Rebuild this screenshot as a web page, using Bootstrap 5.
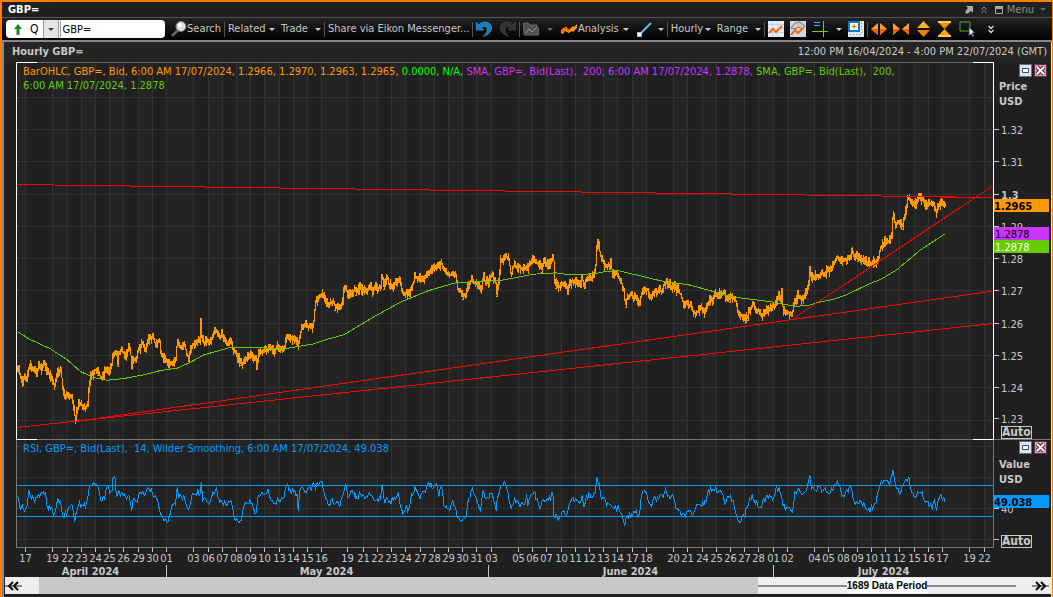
<!DOCTYPE html>
<html lang="en">
<head>
<meta charset="utf-8">
<meta name="viewport" content="width=device-width, initial-scale=1">
<title>GBP= Hourly</title>
<link rel="stylesheet" href="https://cdn.jsdelivr.net/npm/bootstrap@5.3.0/dist/css/bootstrap.min.css">
<style>
body{background:#222;color:#c8c8c8;font:11px/14px "DejaVu Sans Condensed","DejaVu Sans",sans-serif}
button{background:none;border:0;padding:0;color:inherit;font:inherit}
.frame{border:solid #ff8000;border-width:2px 1px 0 2px;min-height:100vh}
.titlebar{height:15px;background:#202020;padding:0 6px}
.titlebar h1{font-size:11px;line-height:14px;font-weight:700;color:#fff}
.titlebar button,.titlebar svg{color:#8c8c8c}
.tools{height:23px;border-top:1px solid #555;background:linear-gradient(#222,#000);white-space:nowrap}
.tools button{display:flex;align-items:center;flex:none}
.symbol{width:159px;height:18px;background:#fff;border-radius:4px;color:#000;margin-left:4px}
.tools .drop{width:16px;height:18px;background:#e4e4e4;border:solid #999;border-width:0 1px;justify-content:center}
.symbol .quote{font-size:12px}
.symbol input{width:90px;height:16px;border:0;padding:0 2px;font:inherit;outline:0;color:#000;border-left:1px solid #999;margin-left:1px;background:none}
.sep{width:1px;height:15px;background:#555;margin:0 3px;flex:none}
.tri{display:inline-block;border:3px solid transparent;border-top-color:#ccc;border-bottom:0}
.tri-dark{border-top-color:#444}.tri-off{border-top-color:#666}.tri-menu{border-top-color:#56687c}
.w1{width:47px}.w2{width:40px}.w3{width:141px}.w4{width:44px}
.g6{margin-left:6px}
.panel{border:solid #888;border-width:2px 0 0 2px;flex:1 0 auto;background:#202020}
.panel-in{border-right:1px solid #eee}
.heading{height:20px;padding:3px 4px 0 8px;background:#242424}
.heading h2{font-size:11px;line-height:14px;font-weight:700;color:#c8c8c8}
.chart{display:grid;grid-template-columns:12px minmax(0,1fr) 57px}
.chart svg{display:block;width:100%}
.price{height:377px}.rsi{height:109px}.dates{height:29px}
.legend-line{left:7px;top:3px;line-height:14px;white-space:pre}
.or{color:#ff9900}.gr{color:#66cc00}.lime{color:#0f0}.vi{color:#cc33ff}.bl{color:#0099ff}
.winbtns{right:4px;top:2px;gap:2px}
.autobtn{left:7px;bottom:0;border:1px solid #c8c8c8;font-size:12px;font-weight:700;line-height:11px;background:#202020}
.scroll{height:17px;margin-left:1px;background:#c8c8c8;color:#000}
.scroll .end{width:34px;background:#eee}
.scroll .thumb{width:28%;background:#eee;padding-right:2px}
.rule{height:2px;background:#888}
.scroll .period{background:#fff;font:700 10px/14px "Liberation Sans",sans-serif}
</style>
</head>
<body>
<main class="frame d-flex flex-column">
<header class="titlebar d-flex align-items-center">
  <h1 class="m-0 me-auto">GBP=</h1>
  <button aria-label="Pop out" class="d-flex"><svg width="8" height="8" viewBox="0 0 8 8"><path d="M1 0h7v7L6 5 2 8 0 6l3-4z" fill="#aaa"/></svg></button>
  <button aria-label="Collapse" class="d-flex ms-2"><svg width="6" height="8" viewBox="0 0 6 8"><path d="M.5 3.500 3 1l2.500 2.500M.5 7 3 4.500 5.500 7" fill="none" stroke="#999"/></svg></button>
  <button aria-label="Restore" class="d-flex ms-2"><svg width="8" height="8" viewBox="0 0 8 8"><path d="M.5 1h7v6.500h-7z" fill="none" stroke="#aaa"/><path d="M0 0h8v3H0z" fill="#aaa"/></svg></button>
  <button class="ms-1 d-flex align-items-center">Menu<span class="tri tri-menu g6"></span></button>
</header>
<nav class="tools d-flex align-items-center" aria-label="Chart tools">
  <div class="symbol d-flex align-items-center">
    <svg class="ms-2" width="8" height="11" viewBox="0 0 8 11"><path d="M4 0 8 5H5.500v6h-3V5H0z" fill="#1d8a1d"/></svg>
    <button class="quote ms-2 me-1">Q</button>
    <button class="drop" aria-label="Quote type"><span class="tri tri-dark"></span></button>
    <input value="GBP=" aria-label="Symbol">
  </div>
  <button class="g6"><svg width="16" height="16" viewBox="0 0 16 16"><path d="M1 15 7 9" stroke="#666" stroke-width="2.500"/><circle cx="10" cy="5.500" r="5" fill="#ddd" stroke="#777"/><circle cx="9" cy="4" r="2" fill="#fff"/></svg>Search</button>
  <i class="sep"></i>
  <button class="w1 justify-content-between">Related<span class="tri"></span></button>
  <button class="w2 g6 justify-content-between">Trade<span class="tri"></span></button>
  <i class="sep"></i>
  <button class="w3">Share via Eikon Messenger...</button>
  <i class="sep"></i>
  <button aria-label="Undo"><svg width="16" height="16" viewBox="0 0 16 16"><path d="M0 1v8h8L5.500 6.500C8 4.500 12 6 11 10c-.5 2-2 4-4 5.500C13 14 16 10 15.500 6 14 0 7-.5 2.800 3.800z" fill="#1c7cc0" stroke="#4aa5dc" stroke-width=".6"/></svg></button>
  <button aria-label="Redo" class="ms-2"><svg width="16" height="16" viewBox="0 0 16 16"><path d="M16 1v8H8l2.500-2.500C8 4.500 4 6 5 10c.5 2 2 4 4 5.500C3 14 0 10 .5 6 2 0 9-.5 13.200 3.800z" fill="#333" stroke="#4a4a4a" stroke-width=".6"/></svg></button>
  <i class="sep"></i>
  <button aria-label="Open chart"><svg width="16" height="14" viewBox="0 0 16 14"><path d="M.5 1h5l1 2H14v3h1.500v7H1z" fill="#505050" stroke="#686868"/><path d="m3 11 3-4 3 3 5-5" fill="none" stroke="#999"/></svg><span class="tri tri-off ms-2"></span></button>
  <button class="ms-2"><svg width="17" height="10" viewBox="0 0 17 10"><path d="m0 6 4-3 4 3 4-4 1 1 3-3v4l-4 4-1-1-3 2-4-2-2 3-2-1z" fill="#ff9a10"/><path d="m1 8 4-4 3 3" stroke="#f60" fill="none" stroke-width="2"/></svg>Analysis<span class="tri ms-1"></span></button>
  <button class="ms-2" aria-label="Draw line"><svg width="15" height="15" viewBox="0 0 15 15"><path d="M3 12 14 1" stroke="#69b7ef" stroke-width="2"/><path d="M.5 10.500h4v4h-4z" fill="#fff" stroke="#9cf"/></svg><span class="tri g6"></span></button>
  <i class="sep"></i>
  <button class="w2 justify-content-between">Hourly<span class="tri"></span></button>
  <button class="w4 g6 justify-content-between">Range<span class="tri"></span></button>
  <i class="sep"></i>
  <button aria-label="Chart"><svg width="16" height="16" viewBox="0 0 16 16"><path d="M0 0h16v16H0z" fill="#e6edf6"/><path d="M0 3.500h16M0 7.500h16M0 11.500h16M4.500 0v16M9.500 0v16" stroke="#c6d2e4"/><path d="m1 12 4-4 3 3 6-6" fill="none" stroke="#f60" stroke-width="2"/></svg></button>
  <button aria-label="Edit chart" class="g6"><svg width="16" height="16" viewBox="0 0 16 16"><path d="M0 0h16v16H0z" fill="#cdd7e6"/><path d="m1 14 4-5 3 3 6-6" fill="none" stroke="#f60" stroke-width="2"/><path d="m1 7 4-5 5-1 5 4-3 3-3-2-4 2z" fill="#ddc4b8" stroke="#777"/></svg></button>
  <button aria-label="Crosshair" class="g6"><svg width="16" height="16" viewBox="0 0 16 16" shape-rendering="crispEdges"><path d="M2 1.500h6M2 4.500h6" stroke="#49b0ff"/><path d="M11.500 0v16M0 10.500h16" stroke="#69cc20"/></svg><span class="tri ms-2"></span></button>
  <button aria-label="Zoom box" class="g6"><svg width="16" height="16" viewBox="0 0 16 16"><path d="M0 0h16v16H0z" fill="#e4eaf4"/><path d="M1 1h10v9H1z" fill="#fff" stroke="#1579c6" stroke-width="2"/><path d="M6 3v5M3.500 5.500h5" stroke="#e70"/><path d="M13.500 2v12M2 13.500h12" stroke="#7c90b0" stroke-dasharray="1 2"/></svg></button>
  <i class="sep"></i>
  <button aria-label="Widen"><svg width="16" height="12" viewBox="0 0 16 12"><path d="M7 0v12L0 6zM9 0v12l7-6z" fill="#ffa030"/><path d="M7 6v6L0 6zM9 6v6l7-6z" fill="#e86800"/></svg></button>
  <button aria-label="Narrow" class="g6"><svg width="16" height="12" viewBox="0 0 16 12"><path d="M0 0v12l7-6zM16 0v12L9 6z" fill="#ffa030"/><path d="M0 6v6l7-6zM16 6v6L9 6z" fill="#e86800"/></svg></button>
  <button aria-label="Taller" class="ms-2"><svg width="13" height="16" viewBox="0 0 13 16"><path d="M0 7h13L6.500 0z" fill="#ffb02c"/><path d="M0 9h13l-6.500 7z" fill="#f08008"/></svg></button>
  <button aria-label="Shorter" class="ms-2"><svg width="13" height="16" viewBox="0 0 13 16"><path d="M0 1h13L6.500 8z" fill="#f08a10"/><path d="M0 15h13L6.500 8z" fill="#ff9a1c"/><path d="M0 0h13v2H0zM0 14h13v2H0z" fill="#ffd040"/></svg></button>
  <button aria-label="Select" class="ms-2"><svg width="17" height="16" viewBox="0 0 17 16"><path d="M1 1h10v9H1z" fill="none" stroke="#55b020"/><path d="m10 6 6 6h-3l2 3-1 1-2-3-2 2z" fill="#dfe8f4" stroke="#345"/></svg></button>
  <button aria-label="More" class="ms-2 ps-1"><svg width="6" height="9" viewBox="0 0 6 9"><path d="m.5 1 2.500 2.500L5.500 1M.5 5 3 7.500 5.500 5" fill="none" stroke="#ddd" stroke-width="1.300"/></svg></button>
</nav>
<section class="panel d-flex flex-column">
<div class="panel-in flex-grow-1">
  <div class="heading d-flex justify-content-between"><h2 class="m-0">Hourly GBP=</h2><span>12:00 PM 16/04/2024 - 4:00 PM 22/07/2024 (GMT)</span></div>
  <div class="chart">
    <div></div>
    <div class="position-relative"><svg id="price" class="price" role="img" aria-label="Hourly price"></svg>
      <div class="legend-line position-absolute"><div class="d-flex"><div class="or">BarOHLC, GBP=, Bid, 6:00 AM 17/07/2024, 1.2966, 1.2970, 1.2963, 1.2965, </div><div class="lime">0.0000, N/A, </div><div class="vi">SMA, GBP=, Bid(Last),  200, 6:00 AM 17/07/2024, 1.2878, </div><div class="gr">SMA, GBP=, Bid(Last),  200,</div></div><div class="gr">6:00 AM 17/07/2024, 1.2878</div></div></div>
    <div class="position-relative"><svg id="priceAxis" class="price"></svg>
      <div class="winbtns position-absolute d-flex"><button aria-label="Maximise"><svg width="13" height="13" viewBox="0 0 13 13"><path d="M.5.5h12v12H.5z" fill="#dfe3ee" stroke="#5c7196"/><path d="M3.500 4.500h6v4h-6z" fill="#fff" stroke="#334a70"/></svg></button><button aria-label="Close"><svg width="13" height="13" viewBox="0 0 13 13"><path d="M.5.5h12v12H.5z" fill="#c4a8b0" stroke="#6c3044"/><path d="m3 3 7 7m0-7-7 7" stroke="#5a2030" stroke-width="4"/><path d="m3 3 7 7m0-7-7 7" stroke="#fff" stroke-width="2"/></svg></button></div>
      <button class="autobtn position-absolute">Auto</button></div>
    <div></div>
    <div class="position-relative"><svg id="rsi" class="rsi" role="img" aria-label="Relative strength"></svg>
      <div class="legend-line position-absolute bl">RSI, GBP=, Bid(Last),  14, Wilder Smoothing, 6:00 AM 17/07/2024, 49.038</div></div>
    <div class="position-relative"><svg id="rsiAxis" class="rsi"></svg>
      <div class="winbtns position-absolute d-flex"><button aria-label="Maximise"><svg width="13" height="13" viewBox="0 0 13 13"><path d="M.5.5h12v12H.5z" fill="#dfe3ee" stroke="#5c7196"/><path d="M3.500 4.500h6v4h-6z" fill="#fff" stroke="#334a70"/></svg></button><button aria-label="Close"><svg width="13" height="13" viewBox="0 0 13 13"><path d="M.5.5h12v12H.5z" fill="#c4a8b0" stroke="#6c3044"/><path d="m3 3 7 7m0-7-7 7" stroke="#5a2030" stroke-width="4"/><path d="m3 3 7 7m0-7-7 7" stroke="#fff" stroke-width="2"/></svg></button></div>
      <button class="autobtn position-absolute">Auto</button></div>
    <div></div><svg id="dates" class="dates"></svg><div></div>
  </div>
  <div class="scroll d-flex">
    <button class="end text-start" aria-label="Scroll back"><svg width="17" height="10" viewBox="0 0 17 10"><path d="M0 5h17" stroke="#888" stroke-width="2"/><path d="M8 1 4 5l4 4M13 1 9 5l4 4" fill="none" stroke="#000" stroke-width="2"/></svg></button>
    <div class="flex-grow-1"></div>
    <div class="thumb d-flex align-items-center"><i class="rule flex-grow-1"></i><span class="period">1689 Data Period</span><i class="rule flex-grow-1"></i>
    <button class="ms-3 d-flex" aria-label="Scroll forward"><svg width="17" height="10" viewBox="0 0 17 10"><path d="M0 5h17" stroke="#888" stroke-width="2"/><path d="m4 1 4 4-4 4M9 1l4 4-4 4" fill="none" stroke="#000" stroke-width="2"/></svg></button></div>
  </div>
</div>
</section>
</main>
<script src="https://cdn.jsdelivr.net/npm/bootstrap@5.3.0/dist/js/bootstrap.bundle.min.js"></script>
<script>
// x runs over the plot's 978 units (16..994); price y starts at 62, RSI y at 439.
const W = 978, X0 = 16;
const pct = x => ((x - X0 + .5) / W * 100) + '%';
// Segments are digitised as [originX, originY, [x,y,...]] in third-units.
const join = segs => segs.flatMap(([ox, oy, p]) => { const r = []; for (let i = 0; i < p.length; i += 2) r.push([ox + p[i] / 3, oy + p[i + 1] / 3]); return r; });
const price = join([
 [0,300,[52,215,56,205,62,240,70,235,80,240,85,210,90,192,95,205,103,215,110,210,117,190,122,205,130,187,137,200,142,215,150,228,157,235,162,265,168,235,172,210,178,225,181,205,186,260,190,290,197,292,205,282,213,285,218,310,223,340,226,356,230,325,236,308,245,310,255,322,260,310,263,300,267,260,270,225,278,215,288,208,295,215,300,235,308,235,312,220,320,212,333,200,338,165,345,155,349,165,352,203,355,160,364,150,372,158,380,165,384,135,390,150,394,205,398,170,408,175,414,145,424,130,434,148,444,110,455,115,465,128,478,125,482,160,490,168,500,185,510,195,520,183,528,180,530,130,540,140,550,130,558,150,565,185,570,145,580,130,590,122,600,120,602,43,604,115,612,122,628,125,638,100,646,86,655,100,668,108,680,130,692,112,700,155,710,170,725,192,735,180,750,172,766,180,769,208,772,175,778,152,790,152,800,145,806,138,818,145,820,155,830,145,850,148,858,112,870,112,889,115,893,148,898,115,905,82,920,80,935,75,940,60,945,15]],
 [300,230,[46,215,55,200,64,190,75,205,86,232,90,210,105,220,120,232,127,215,131,180,145,188,160,180,175,182,179,165,182,182,200,177,213,168,215,190,217,175,230,175,243,170,245,132,249,165,260,142,267,168,280,165,297,145,305,185,325,195,335,170,343,145,360,148,375,143,387,115,405,115,423,95,435,125,455,130,465,130,472,180,485,188,497,198,505,165,515,145,530,158,543,175,551,125,556,165,575,135,586,150,589,182,597,140,600,95,615,78,627,95,632,140,643,95,650,115,670,112,680,125,687,105,700,85,720,108,735,95,753,100,760,82,762,158,775,163,798,165,802,190,806,165,820,150,838,165,845,140,850,172,858,145,880,140,886,120,890,38,896,45,902,92,920,105,930,110,932,85,935,130,955,135,965,160,975,215,980,200,990,195]],
 [600,230,[105,205,113,220,120,205,127,175,140,185,155,200,165,180,187,178,195,155,215,165,235,180,250,220,270,222,285,248,300,238,315,240,330,205,345,195,362,188,380,205,395,195,405,205,413,245,420,260,432,260,445,245,457,220,465,240,485,250,500,240,520,230,535,200,543,215,545,178,548,240,560,245,575,260,582,220,590,200,610,200,620,185,627,145,629,115,632,145,655,130,680,125,695,122,710,80,725,90,740,78,751,70,755,48,760,75,790,85,800,100,820,100,835,85,840,50]],
 [800,60,[255,548,270,535,276,520,278,460,285,490,300,490,308,490,315,450,322,418,332,418,340,440,352,430,358,415,370,418,372,438,385,432,404,440,407,460,411,440,425,430,434,435]]]);
const sma = join([
 [0,300,[52,94,85,115,150,145,200,178,240,213,275,230,320,239,370,234,430,223,480,210,530,203,570,185,610,163,650,152,692,140,780,142,850,145]],
 [300,230,[0,347,40,340,85,325,130,313,180,283,225,256,300,215,385,180,465,157,600,150,700,131,765,127,800,132,840,132,885,129,920,122,955,121]],
 [600,230,[60,122,190,153,265,163,375,193,425,203,520,215,580,227,620,226,650,216,700,206,740,192,800,163,840,147]],
 [800,60,[290,627,360,568,434,520]]]);
const rsi = join([
 [0,435,[52,180,58,215,68,220,80,210,85,165,93,190,103,200,113,178,125,170,135,172,140,215,150,222,160,240,165,225,172,190,180,195,187,240,198,238,207,212,217,220,223,258,230,225,237,200,248,210,258,205,263,180,267,150,275,148,288,148,297,170,300,195,312,190,317,160,335,165,337,130,343,122,348,185,355,165,368,180,385,180,394,225,398,190,410,200,418,170,435,175,445,160,460,185,473,200,480,235,495,250,502,262,510,235,513,210,525,208,530,155,535,185,550,180,560,215,567,215,577,175,600,170,602,140,607,195,620,200,630,195,637,170,648,155,655,190,665,200,680,210,690,195,700,240,712,255,722,255,728,220,735,200,755,205,767,232,773,180,785,170,795,175,802,160,808,185,820,205,835,195,850,190,858,150,868,160,880,170,890,175,893,225,898,165,905,155,920,165,932,165,938,140,945,160,950,140,965,142,975,190,985,210,995,190,1005,205,1018,215,1027,180,1035,148,1042,185,1055,165,1065,190]],
 [350,435,[10,175,20,190,30,175,50,185,60,180,72,195,90,190,95,145,100,190,115,200,135,190,143,170,150,215,157,235,165,220,175,220,183,175,193,155,205,180,225,170,235,140,245,160,257,145,265,185,273,152,280,210,298,225,307,195,315,215,320,245,335,255,347,240,352,200,362,165,373,180,385,215,390,225,398,165,405,190,425,175,437,225,440,190,450,150,465,145,475,190,482,220,492,185,505,205,525,200,528,175,532,210,540,180,550,170,560,190,568,220,575,195,590,190,600,195,607,170,610,240,620,247,635,228,648,240,660,200,675,190,685,200,695,180,700,215,708,180,725,185,735,170,739,125,747,145,750,180,765,195,775,205,790,220,803,210,815,240,823,270,830,240,850,228,865,240,872,185,885,170,895,200,903,215,910,185,925,190,938,185,945,160,955,180,970,190,980,220,992,240,1005,245,1015,225,1025,240,1035,220]],
 [700,435,[0,210,10,210,20,180,30,155,42,165,60,165,73,205,85,185,98,195,108,240,117,260,125,240,133,245,140,215,155,175,165,205,180,215,190,190,220,185,228,150,240,175,247,210,262,215,275,230,283,170,295,160,308,175,320,155,328,118,333,160,345,165,360,155,385,175,397,165,407,145,417,150,427,180,443,170,453,155,460,195,475,205,490,200,502,225,520,210,530,180,540,145,560,135,567,150,577,105,585,150,600,175,612,140,625,125,633,170,645,185,665,170,675,200,690,205,695,220,702,195,708,225,717,185,730,185,733,200]]]);
const ticks = [[25,'17'],[52,'19'],[67,'22'],[81,'23'],[95,'24'],[109,'25'],[123,'26'],[138,'29'],[152,'30'],[166,'01'],[193,'03'],[208,'06'],[222,'07'],[236,'08'],[250,'09'],[264,'10'],[279,'13'],[293,'14'],[307,'15'],[321,'16'],[347,'19'],[363,'21'],[377,'22'],[391,'23'],[405,'24'],[420,'27'],[434,'28'],[448,'29'],[462,'30'],[476,'31'],[491,'03'],[518,'05'],[532,'06'],[546,'07'],[561,'10'],[575,'11'],[589,'12'],[603,'13'],[617,'14'],[632,'17'],[646,'18'],[673,'20'],[687,'21'],[702,'24'],[716,'25'],[730,'26'],[744,'27'],[758,'28'],[773,'01'],[787,'02'],[814,'04'],[828,'05'],[843,'08'],[857,'09'],[871,'10'],[885,'11'],[899,'12'],[914,'15'],[928,'16'],[942,'17'],[969,'19'],[984,'22']];
let seed = 7; const rnd = () => (seed = (seed * 16807) % 2147483647) / 2147483647;
const at = (pts, x) => { let i = 1; while (i < pts.length - 1 && pts[i][0] < x) i++; const [a, b] = pts[i - 1], [c, d] = pts[i]; return b + (d - b) * (x - a) / (c - a || 1); };
const poly = (pts, col, top) => `<polyline fill="none" stroke="${col}" vector-effect="non-scaling-stroke" points="${pts.map(p => (p[0] - X0 + .5).toFixed(2) + ',' + (p[1] - top + .5).toFixed(2)).join(' ')}"/>`;
const hl = (y, c) => `<line x1="0" x2="100%" y1="${y + .5}" y2="${y + .5}" stroke="${c}"/>`;
const vl = (x, y1, y2, c) => `<line x1="${pct(x)}" x2="${pct(x)}" y1="${y1}" y2="${y2}" stroke="${c}"/>`;
function bands(h) {
  let s = '', e = [X0, ...ticks.map(t => t[0]), 994];
  for (let i = 0; i < e.length - 1; i++) s += `<rect x="${(e[i] - X0) / W * 100}%" width="${(e[i + 1] - e[i]) / W * 100}%" height="${h}" fill="${i % 2 ? '#202020' : '#242424'}"/>`;
  return s + ticks.map(t => vl(t[0], 0, h, '#323232')).join('');
}
const nest = (h, body) => `<svg viewBox="0 0 ${W} ${h}" width="100%" height="${h}" preserveAspectRatio="none">${body}</svg>`;
// Each bar is a high-low range around the traced middle, which itself drifts a little.
const bars = []; let drift = 0;
for (let x = 17; x <= 944.5; x += .5) {
  if (x % 1 === 0) drift = drift * .4 + (rnd() - .5) * 4;
  const y = at(price, x) + drift;
  bars.push([x, y - 1 - rnd() ** 3 * 5], [x, y + 1 + rnd() ** 3 * 5]);
}
const noisy = rsi.flatMap((p, i) => { const n = rsi[i + 1]; if (!n) return [p]; const r = [p], k = Math.floor((n[0] - p[0]) / 1.1); for (let j = 1; j < k; j++) r.push([p[0] + (n[0] - p[0]) * j / k, p[1] + (n[1] - p[1]) * j / k + (rnd() - .5) * 8]); return r; });
const $ = id => document.getElementById(id);
const corner = `<path d="M0 .5h21" stroke="#fff"/><svg x="100%" overflow="visible"><path d="M-21 .5h21" stroke="#fff"/></svg>`;
$('price').innerHTML = `<g shape-rendering="crispEdges">${bands(377)}${[97,129,161,194,226,258,290,323,355,387,420].map(y => hl(y - 62, '#323232')).join('')}
${nest(377, poly(bars, '#ff9900', 62) + poly(sma, '#66cc00', 62) + poly([[16,184],[993,197]], '#f00', 62) + poly([[882,196],[993,197]], '#f00', 62) + poly([[16,427],[993,323]], '#f00', 62) + poly([[75,421],[993,290.5]], '#f00', 62) + poly([[793,318],[993,185]], '#f00', 62))}
${hl(0, '#666')}${vl(16, 0, 377, '#fff')}${vl(993, 0, 377, '#fff')}${corner}</g>`;
$('rsi').innerHTML = `<g shape-rendering="crispEdges">${bands(109)}${[446,477,508,539].map(y => hl(y - 439, '#323232')).join('')}${hl(46, '#0099ff')}${hl(77, '#0099ff')}
${nest(109, poly(noisy, '#0099ff', 439))}${hl(0, '#777')}${hl(108, '#777')}${vl(16, 0, 109, '#777')}${vl(993, 0, 109, '#777')}${corner}</g>`;
const lab = (y, t, b) => `<path d="M0 ${y - .5}h5" stroke="#c8c8c8"/><text x="7" y="${y + 4}" fill="#c8c8c8" ${b ? 'font-weight="700"' : ''}>${t}</text>`;
const tag = (y, h, c, t, f, b) => `<rect y="${y}" width="55" height="${h}" fill="${c}"/><text x="${b ? 0 : 1}" y="${y + h - 2}" fill="${f}" ${b ? 'font-weight="700"' : ''}>${t}</text>`;
const unit = (y, t) => `<text x="5" y="${y}" fill="#c8c8c8" font-weight="700">${t}</text>`;
$('priceAxis').innerHTML = unit(28, 'Price') + unit(43, 'USD') + [[129,'1.32'],[161,'1.31'],[194,'1.3'],[226,'1.29'],[258,'1.28'],[290,'1.27'],[323,'1.26'],[355,'1.25'],[387,'1.24'],[418,'1.23']].map(([y, t]) => lab(y - 61, t, t == '1.3')).join('') + tag(137, 13, '#ff9900', '1.2965', '#000', 1) + tag(165, 13, '#cc33ff', '1.2878', '#000') + tag(178, 13, '#66cc00', '1.2878', '#fff');
$('rsiAxis').innerHTML = `<path d="M0 .5h57" stroke="#777"/>` + unit(29, 'Value') + unit(44, 'USD') + lab(70, '40') + lab(101, '') + tag(56, 13, '#0099ff', '49.038', '#000', 1);
$('dates').innerHTML = ticks.map(([x, t]) => vl(x, 0, 4, '#c8c8c8') + `<text x="${pct(x)}" y="14" text-anchor="middle" fill="#c8c8c8">${t}</text>`).join('') + [166,488,773].map(x => vl(x, 17, 29, '#c8c8c8')).join('') + [[90,'April 2024'],[326,'May 2024'],[630,'June 2024'],[883,'July 2024']].map(([x, t]) => `<text x="${pct(x)}" y="27" text-anchor="middle" font-weight="700" fill="#c8c8c8">${t}</text>`).join('');
</script>
</body>
</html>
